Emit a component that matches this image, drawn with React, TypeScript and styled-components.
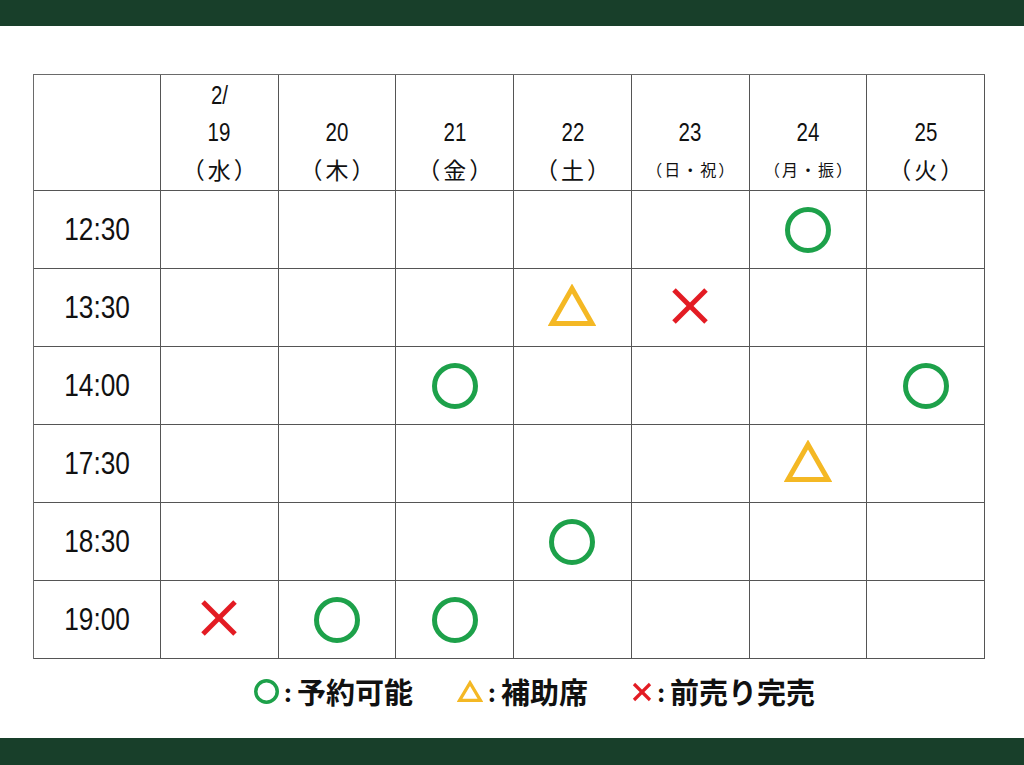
import React from "react";
import styled, { createGlobalStyle } from "styled-components";

const Global = createGlobalStyle`
  html, body { margin: 0; padding: 0; background: #ffffff; }
  body { font-family: "Noto Sans CJK JP", "Liberation Sans", sans-serif; color: #111; }
`;

const Page = styled.div`
  width: 1024px;
  height: 765px;
  display: flex;
  flex-direction: column;
  background: #fff;
  overflow: hidden;
`;

const Bar = styled.div<{ $h: number }>`
  height: ${(p) => p.$h}px;
  background: #183f2a;
  flex: none;
`;

const Main = styled.div`
  flex: 1;
  display: flex;
  flex-direction: column;
  align-items: flex-start;
  padding: 48px 0 0 33px;
`;

const Grid = styled.div`
  width: 952px;
  display: grid;
  grid-template-columns: 127px repeat(7, 1fr);
  grid-template-rows: 116px repeat(6, 78px);
  border-top: 1px solid #6a6a6a;
  border-left: 1px solid #6a6a6a;
  box-sizing: border-box;
`;

const Cell = styled.div`
  border-right: 1px solid #555;
  border-bottom: 1px solid #555;
  display: flex;
  align-items: center;
  justify-content: center;
  box-sizing: border-box;
`;

const HeadCell = styled(Cell)`
  flex-direction: column;
  justify-content: flex-end;
  padding-bottom: 2px;
`;

const Narrow = styled.span<{ $size: number }>`
  display: inline-block;
  font-family: "Liberation Sans", Arial, sans-serif;
  font-size: ${(p) => p.$size}px;
  transform: scaleX(0.82);
  color: #111;
  white-space: nowrap;
`;

const HeadLine = styled.div`
  height: 37px;
  line-height: 37px;
  text-align: center;
`;

const HeadDay = styled.div<{ $small?: boolean }>`
  height: 37px;
  line-height: 37px;
  font-size: ${(p) => (p.$small ? "16px" : "23px")};
  letter-spacing: ${(p) => (p.$small ? "2px" : "3px")};
  text-indent: ${(p) => (p.$small ? "2px" : "3px")};
  text-align: center;
  white-space: nowrap;
  color: #111;
`;

const TimeCell = styled(Cell)``;

const Legend = styled.div`
  margin-top: 18px;
  margin-left: 221px;
  display: flex;
  align-items: center;
  gap: 44px;
`;

const LegendItem = styled.div`
  display: flex;
  align-items: center;
  font-size: 29px;
  font-weight: 700;
  color: #111;
  line-height: 1;
`;

const Colon = styled.span`
  display: inline-block;
  width: 18px;
  text-align: center;
  font-size: 24px;
`;

const GREEN = "#1da14a";
const YELLOW = "#f4b824";
const RED = "#e31b23";

type Mark = "o" | "t" | "x";

const Circle = ({ size = 46, sw = 5 }: { size?: number; sw?: number }) => (
  <svg width={size} height={size} viewBox={`0 0 ${size} ${size}`}>
    <circle cx={size / 2} cy={size / 2} r={size / 2 - sw / 2} fill="none" stroke={GREEN} strokeWidth={sw} />
  </svg>
);

const Triangle = ({ w = 48, h = 42, sw = 5, lift = 5 }: { w?: number; h?: number; sw?: number; lift?: number }) => (
  <svg width={w} height={h} viewBox={`0 0 ${w} ${h}`} style={{ marginTop: -lift }}>
    <polygon
      points={`${w / 2},${sw * 0.9} ${w - sw * 0.8},${h - sw / 2} ${sw * 0.8},${h - sw / 2}`}
      fill="none"
      stroke={YELLOW}
      strokeWidth={sw}
      strokeLinejoin="miter"
    />
  </svg>
);

const Cross = ({ size = 36, sw = 5, lift = 3 }: { size?: number; sw?: number; lift?: number }) => (
  <svg width={size} height={size} viewBox={`0 0 ${size} ${size}`} style={{ marginTop: -lift }}>
    <line x1={2} y1={2} x2={size - 2} y2={size - 2} stroke={RED} strokeWidth={sw} />
    <line x1={size - 2} y1={2} x2={2} y2={size - 2} stroke={RED} strokeWidth={sw} />
  </svg>
);

const MarkIcon = ({ m }: { m?: Mark }) => {
  if (m === "o") return <Circle />;
  if (m === "t") return <Triangle />;
  if (m === "x") return <Cross />;
  return null;
};

const days: { top?: string; num: string; wd: string; small?: boolean }[] = [
  { top: "2/", num: "19", wd: "（水）" },
  { num: "20", wd: "（木）" },
  { num: "21", wd: "（金）" },
  { num: "22", wd: "（土）" },
  { num: "23", wd: "（日・祝）", small: true },
  { num: "24", wd: "（月・振）", small: true },
  { num: "25", wd: "（火）" },
];

const rows: { time: string; marks: Record<number, Mark> }[] = [
  { time: "12:30", marks: { 5: "o" } },
  { time: "13:30", marks: { 3: "t", 4: "x" } },
  { time: "14:00", marks: { 2: "o", 6: "o" } },
  { time: "17:30", marks: { 5: "t" } },
  { time: "18:30", marks: { 3: "o" } },
  { time: "19:00", marks: { 0: "x", 1: "o", 2: "o" } },
];

export default function App() {
  return (
    <>
      <Global />
      <Page>
        <Bar $h={26} />
        <Main>
          <Grid>
            <Cell />
            {days.map((d) => (
              <HeadCell key={d.num}>
                {d.top && (
                  <HeadLine>
                    <Narrow $size={25}>{d.top}</Narrow>
                  </HeadLine>
                )}
                <HeadLine>
                  <Narrow $size={25}>{d.num}</Narrow>
                </HeadLine>
                <HeadDay $small={d.small}>{d.wd}</HeadDay>
              </HeadCell>
            ))}
            {rows.map((r) => (
              <React.Fragment key={r.time}>
                <TimeCell>
                  <Narrow $size={32}>{r.time}</Narrow>
                </TimeCell>
                {days.map((_, i) => (
                  <Cell key={i}>
                    <MarkIcon m={r.marks[i]} />
                  </Cell>
                ))}
              </React.Fragment>
            ))}
          </Grid>
          <Legend>
            <LegendItem>
              <Circle size={25} sw={3.5} />
              <Colon>:</Colon>予約可能
            </LegendItem>
            <LegendItem>
              <Triangle w={26} h={22} sw={3.2} lift={1} />
              <Colon>:</Colon>補助席
            </LegendItem>
            <LegendItem>
              <Cross size={20} sw={3.2} lift={0} />
              <Colon>:</Colon>前売り完売
            </LegendItem>
          </Legend>
        </Main>
        <Bar $h={27} />
      </Page>
    </>
  );
}
